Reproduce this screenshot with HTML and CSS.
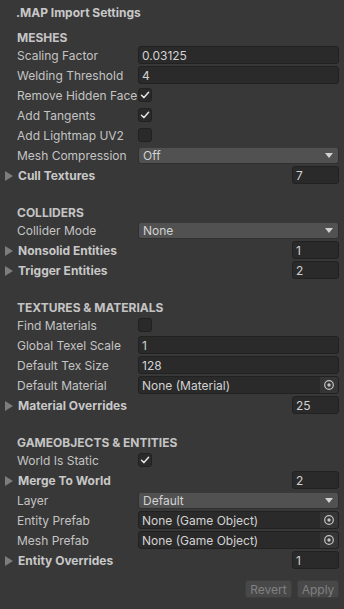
FILE: index.html
```html
<!DOCTYPE html>
<html>
<head>
<meta charset="utf-8">
<link rel="stylesheet" href="styles.css">
</head>
<body>
<div class="inspector">
  <div class="title">.MAP Import Settings</div>

  <section class="section first">
    <div class="header">MESHES</div>
    <div class="rows">
      <div class="row"><span class="label">Scaling Factor</span><div class="field">0.03125</div></div>
      <div class="row"><span class="label">Welding Threshold</span><div class="field">4</div></div>
      <div class="row"><span class="label">Remove Hidden Face</span><div class="check on"><svg viewBox="0 0 14 14"><path d="M3.5 7.3 L6 9.6 L10.6 4.2"/></svg></div></div>
      <div class="row"><span class="label">Add Tangents</span><div class="check on"><svg viewBox="0 0 14 14"><path d="M3.5 7.3 L6 9.6 L10.6 4.2"/></svg></div></div>
      <div class="row"><span class="label">Add Lightmap UV2</span><div class="check"></div></div>
      <div class="row"><span class="label">Mesh Compression</span><div class="popup"><span>Off</span><i class="arrow"></i></div></div>
      <div class="row fold"><i class="tri"></i><span class="label bold">Cull Textures</span><div class="count">7</div></div>
    </div>
  </section>

  <section class="section">
    <div class="header">COLLIDERS</div>
    <div class="rows">
      <div class="row"><span class="label">Collider Mode</span><div class="popup"><span>None</span><i class="arrow"></i></div></div>
      <div class="row fold"><i class="tri"></i><span class="label bold">Nonsolid Entities</span><div class="count">1</div></div>
      <div class="row fold"><i class="tri"></i><span class="label bold">Trigger Entities</span><div class="count">2</div></div>
    </div>
  </section>

  <section class="section">
    <div class="header">TEXTURES &amp; MATERIALS</div>
    <div class="rows">
      <div class="row"><span class="label">Find Materials</span><div class="check"></div></div>
      <div class="row"><span class="label">Global Texel Scale</span><div class="field">1</div></div>
      <div class="row"><span class="label">Default Tex Size</span><div class="field">128</div></div>
      <div class="row"><span class="label">Default Material</span><div class="objfield"><span>None (Material)</span><i class="picker"><svg viewBox="0 0 12 12"><circle class="ring" cx="6" cy="6" r="4.3"/><circle class="dot" cx="6" cy="6" r="1.7"/></svg></i></div></div>
      <div class="row fold"><i class="tri"></i><span class="label bold">Material Overrides</span><div class="count">25</div></div>
    </div>
  </section>

  <section class="section">
    <div class="header">GAMEOBJECTS &amp; ENTITIES</div>
    <div class="rows">
      <div class="row"><span class="label">World Is Static</span><div class="check on"><svg viewBox="0 0 14 14"><path d="M3.5 7.3 L6 9.6 L10.6 4.2"/></svg></div></div>
      <div class="row fold"><i class="tri"></i><span class="label bold">Merge To World</span><div class="count">2</div></div>
      <div class="row"><span class="label">Layer</span><div class="popup"><span>Default</span><i class="arrow"></i></div></div>
      <div class="row"><span class="label">Entity Prefab</span><div class="objfield"><span>None (Game Object)</span><i class="picker"><svg viewBox="0 0 12 12"><circle class="ring" cx="6" cy="6" r="4.3"/><circle class="dot" cx="6" cy="6" r="1.7"/></svg></i></div></div>
      <div class="row"><span class="label">Mesh Prefab</span><div class="objfield"><span>None (Game Object)</span><i class="picker"><svg viewBox="0 0 12 12"><circle class="ring" cx="6" cy="6" r="4.3"/><circle class="dot" cx="6" cy="6" r="1.7"/></svg></i></div></div>
      <div class="row fold"><i class="tri"></i><span class="label bold">Entity Overrides</span><div class="count">1</div></div>
    </div>
  </section>

  <div class="buttons">
    <button class="btn revert">Revert</button>
    <button class="btn apply">Apply</button>
  </div>
</div>
</body>
</html>
```

FILE: styles.css
```css
html, body {
  margin: 0;
  padding: 0;
  background: #383838;
}

.inspector {
  width: 344px;
  height: 609px;
  box-sizing: border-box;
  padding: 2px 5px 0 0;
  font-family: Inter, "Noto Sans", sans-serif;
  font-size: 12px;
  color: #c4c4c4;
  background: #383838;
}

.title {
  box-sizing: border-box;
  height: 20px;
  padding-top: 2px;
  line-height: 18px;
  padding-left: 16px;
  font-weight: 700;
  font-size: 12px;
  color: #c8c8c8;
}

.section {
  margin-top: 19px;
}

.section.first {
  margin-top: 6px;
}

.header {
  box-sizing: border-box;
  height: 18px;
  padding-top: 2px;
  line-height: 16px;
  padding-left: 17px;
  font-weight: 700;
  color: #c4c4c4;
}

.rows {
  display: flex;
  flex-direction: column;
  gap: 2px;
}

.row {
  display: flex;
  align-items: center;
  height: 18px;
  padding-left: 17px;
}

.label {
  box-sizing: border-box;
  width: 121px;
  height: 18px;
  flex: none;
  white-space: nowrap;
  padding-top: 2px;
  line-height: 16px;
}

.label.bold {
  font-weight: 700;
  color: #c8c8c8;
}

.row.fold {
  padding-left: 5px;
}

.tri {
  flex: none;
  width: 0;
  height: 0;
  border-top: 5px solid transparent;
  border-bottom: 5px solid transparent;
  border-left: 8px solid #7d7d7d;
  margin-right: 5px;
  margin-top: 1px;
}

.row.fold .label {
  flex: 1;
  width: auto;
}

.field,
.count,
.objfield {
  box-sizing: border-box;
  height: 18px;
  line-height: 16px;
  background: #2a2a2a;
  border: 1px solid #212121;
  border-radius: 3px;
  color: #d2d2d2;
  padding-left: 3px;
  white-space: nowrap;
  overflow: hidden;
}

.field,
.count,
.objfield span,
.popup span {
  padding-top: 1px;
}

.field,
.count {
  line-height: 15px;
}

.field {
  flex: 1;
}

.count {
  flex: none;
  width: 47px;
  margin-left: auto;
}

.objfield {
  flex: 1;
  display: flex;
  align-items: center;
  padding-right: 0;
}

.objfield span {
  flex: 1;
  line-height: 15px;
}

.picker {
  flex: none;
  width: 18px;
  height: 16px;
  display: flex;
  align-items: center;
  justify-content: center;
  background: #353535;
  border-radius: 0 2px 2px 0;
}

.picker svg {
  width: 12px;
  height: 12px;
}

.picker .ring {
  fill: none;
  stroke: #c4c4c4;
  stroke-width: 1.2;
}

.picker .dot {
  fill: #c4c4c4;
}

.check {
  box-sizing: border-box;
  width: 14px;
  height: 14px;
  background: #2a2a2a;
  border: 1px solid #212121;
  border-radius: 3px;
  display: flex;
  align-items: center;
  justify-content: center;
}

.check svg {
  width: 14px;
  height: 14px;
  flex: none;
}

.check path {
  fill: none;
  stroke: #e4e4e4;
  stroke-width: 1.5;
  stroke-linecap: round;
  stroke-linejoin: round;
}

.popup {
  flex: 1;
  box-sizing: border-box;
  height: 17px;
  margin-top: 1px;
  display: flex;
  align-items: center;
  padding: 0 5px 0 4px;
  background: #515151;
  border: 1px solid #303030;
  border-top-color: #3a3a3a;
  border-radius: 3px;
  color: #d2d2d2;
}

.popup span {
  flex: 1;
  line-height: 14px;
}

.arrow {
  width: 0;
  height: 0;
  border-left: 4px solid transparent;
  border-right: 4px solid transparent;
  border-top: 5px solid #d2d2d2;
}

.buttons {
  display: flex;
  justify-content: flex-end;
  gap: 5px;
  margin-top: 11px;
}

.btn {
  box-sizing: border-box;
  height: 18px;
  padding: 1px 0 0;
  font-family: Inter, "Noto Sans", sans-serif;
  font-size: 12px;
  line-height: 15px;
  color: #808080;
  background: #484848;
  border: 1px solid #3e3e3e;
  border-radius: 3px;
}

.btn.revert {
  width: 47px;
}

.btn.apply {
  width: 42px;
}
```
